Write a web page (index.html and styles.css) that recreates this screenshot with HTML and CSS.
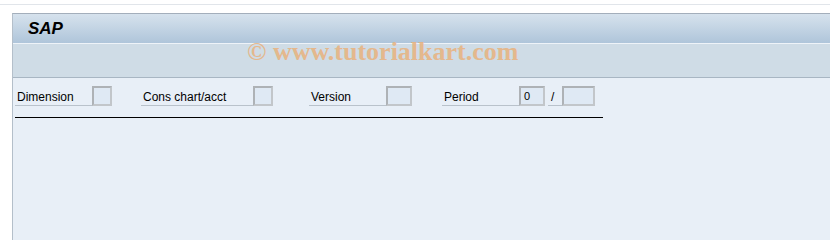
FILE: index.html
```html
<!DOCTYPE html>
<html lang="en">

<head>
    <meta charset="UTF-8">
    <title>SAP</title>
    <link rel="stylesheet" href="styles.css">
</head>

<body>
    <div class="topbar"></div>
    <div class="frame">
        <div class="titlebar">SAP</div>
        <div class="toolbar"></div>
        <div class="content">
            <div class="row">
                <span class="lbl w77">Dimension</span>
                <span class="box"></span>
                <span class="lbl w112 gap29">Cons chart/acct</span>
                <span class="box"></span>
                <span class="lbl w77 gap36">Version</span>
                <span class="box wide26"></span>
                <span class="lbl w77 gap30">Period</span>
                <span class="box wide26">0</span>
                <span class="lbl slash">/</span>
                <span class="box wide33"></span>
            </div>
            <div class="sep"></div>
        </div>
        <div class="watermark">&copy; www.tutorialkart.com</div>
    </div>
</body>

</html>
```

FILE: styles.css
```css
body {
    margin: 0;
    height: 240px;
    background: #fff;
    font-family: "Liberation Sans", Arial, sans-serif;
    font-size: 12px;
    overflow: hidden;
}

.topbar {
    height: 4px;
    border-bottom: 1px solid #e1e5ea;
    background: #fff;
}

.frame {
    position: relative;
    margin-left: 12px;
    margin-top: 8px;
    border-left: 1px solid #b4bfca;
    border-top: 1px solid #a3aebb;
}

.titlebar {
    height: 29px;
    padding-left: 15px;
    background: linear-gradient(#d6e2ed, #afc5da);
    font-weight: bold;
    font-style: italic;
    font-size: 17px;
    line-height: 29px;
    color: #000;
}

.toolbar {
    height: 33px;
    border-top: 1px solid #eef3f8;
    border-bottom: 1px solid #a8b6c3;
    background: #cfdce6;
}

.content {
    height: 160px;
    padding: 8px 0 0 2px;
    background: #e8eff7;
}

.row {
    display: flex;
    align-items: flex-end;
    height: 20px;
}

.lbl {
    height: 19px;
    line-height: 21px;
    padding-left: 2px;
    border-bottom: 1px solid #b9c2cb;
    color: #000;
    box-sizing: border-box;
}

.w77 { width: 77px; }
.w112 { width: 112px; }
.gap29 { margin-left: 29px; }
.gap36 { margin-left: 36px; }
.gap30 { margin-left: 30px; }

.slash {
    width: 14px;
    margin-left: 3px;
    padding-left: 3px;
}

.box {
    width: 20px;
    height: 20px;
    box-sizing: border-box;
    border: 2px solid #aeb2b6;
    border-right-color: #c2c6ca;
    border-bottom-color: #c2c6ca;
    background: #dfe9f4;
    padding-left: 3px;
    line-height: 16px;
    font-size: 11px;
}

.wide26 { width: 26px; }
.wide33 { width: 33px; }

.sep {
    width: 588px;
    height: 1px;
    margin-top: 11px;
    background: #000;
}

.watermark {
    position: absolute;
    left: 234px;
    top: 23px;
    font-family: "Liberation Serif", "Times New Roman", serif;
    font-weight: bold;
    font-size: 26px;
    color: #e8b27e;
    opacity: 0.85;
}
```
